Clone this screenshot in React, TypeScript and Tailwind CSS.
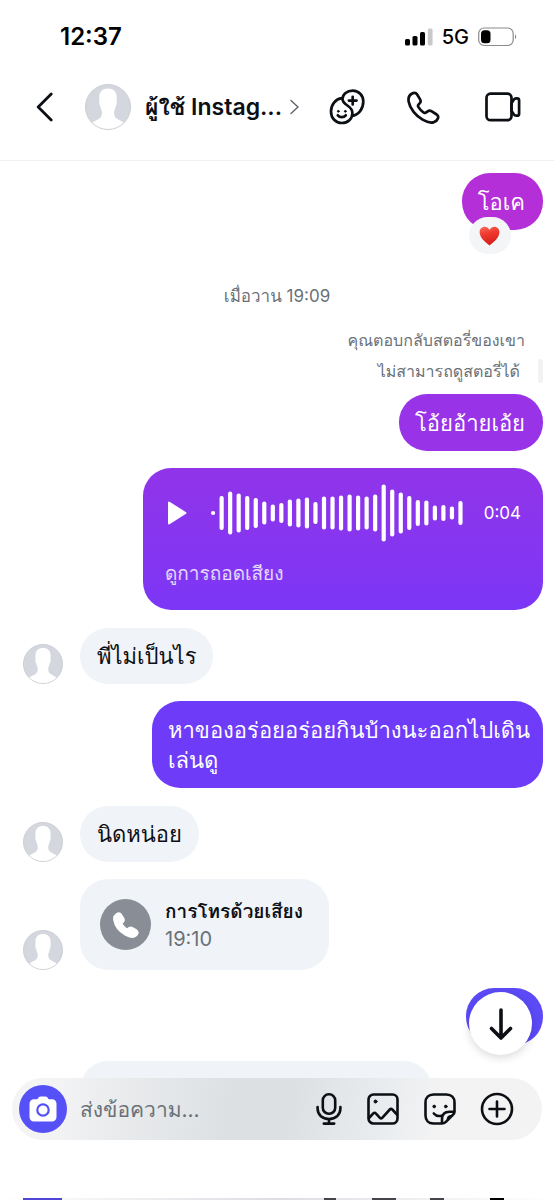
import type { ReactNode } from "react";

const WAVE = [4, 34, 43, 39, 34, 30, 23, 17, 20, 27, 29, 31, 22, 33, 33, 35, 37, 35, 33, 37, 57, 47, 41, 34, 26, 25, 15, 16, 13, 24];

function Avatar({ className }: { className: string }) {
  return (
    <svg viewBox="0 0 46 46" className={className} aria-hidden="true">
      <circle cx="23" cy="23" r="22.5" fill="#d4d7de" />
      <path
        d="M23 4.500c-5.300 0-8.700 3-8.700 8.500v3.500c-.5 2.500.2 5 1.200 6.300.3 2 .8 3.400 1.500 4.700.2 3.200-.6 5.700-3 7.200-2.200 1.400-5 2.200-7.200 4.300A22.500 22.500 0 0 0 23 45.500a22.500 22.500 0 0 0 16.200-6.500c-2.200-2.100-5-2.900-7.200-4.300-2.400-1.500-3.200-4-3-7.200.7-1.300 1.200-2.700 1.500-4.700 1-1.300 1.700-3.800 1.200-6.300V13c0-5.500-3.400-8.500-8.700-8.500z"
        fill="#fff"
      />
      <circle cx="23" cy="23" r="22.500" fill="none" stroke="#c6c9cf" strokeWidth="0.900" />
    </svg>
  );
}

function Incoming({ children, className }: { children: ReactNode; className: string }) {
  return (
    <div className="flex items-end gap-[17px] pl-[23px]">
      <Avatar className="size-10 shrink-0" />
      <div className={className}>{children}</div>
    </div>
  );
}

function SignalIcon() {
  return (
    <svg width="28" height="18" viewBox="0 0 28 18" aria-hidden="true">
      <rect x="0" y="11" width="5" height="6.500" rx="1.500" />
      <rect x="7.500" y="8" width="5" height="9.500" rx="1.500" />
      <rect x="15" y="4" width="5" height="13.500" rx="1.500" />
      <rect x="22.800" y="0.500" width="4.800" height="17" rx="1.500" fill="#c9c9c9" />
    </svg>
  );
}

function BatteryIcon() {
  return (
    <svg width="39" height="20" viewBox="0 0 39 20" aria-hidden="true">
      <rect x="0.700" y="1" width="34.500" height="17.500" rx="5.500" fill="none" stroke="#8b8b8b" strokeWidth="1.200" />
      <rect x="3" y="3.300" width="9.500" height="13" rx="3.500" />
      <path d="M37 7.500c1.600.6 1.600 4 0 4.600z" fill="#8b8b8b" />
    </svg>
  );
}

function FacesIcon() {
  return (
    <svg width="36" height="36" viewBox="0 0 36 36" fill="none" stroke="currentColor" strokeWidth="2.700" strokeLinecap="round" strokeLinejoin="round" aria-hidden="true">
      <path d="M12.800 9.200C6.500 10 2 15.700 2 22.500 2 29.300 6.700 34 12.800 34c6 0 10.600-4.300 10.600-9.800 0-3.800-2-5.700-5-7.700-3.200-2.100-4.900-3.700-4.900-6.500 0-4.800 4.700-8.400 10.200-8.400 6 0 10.600 4.700 10.600 10.900 0 7.300-4.700 13.500-11.300 14.300" />
      <path d="M23.700 7.800v7.600M19.900 11.600h7.600" />
      <path d="M8.800 26.300c2 2.400 6 2.400 8 0" />
      <circle cx="9.300" cy="22.300" r="0.900" fill="currentColor" strokeWidth="1" />
      <circle cx="16.300" cy="22.300" r="0.900" fill="currentColor" strokeWidth="1" />
    </svg>
  );
}

const PHONE =
  "M4.300 3C1.800 4.500 1.100 7.200 1.700 10.700c1.200 7 7.200 14.200 13.900 18 3.800 2.200 8.100 3.500 11.400 2.400 1.900-.7 3.400-2.200 4-3.900.5-1.500 0-2.800-1.300-3.700l-4.900-3.100c-1.500-.9-2.900-.9-4.100-.1l-1.900 1.300c-.8.500-1.500.5-2.300-.1-2-1.500-3.900-3.500-5.200-5.600-.5-.8-.4-1.500.2-2.200l1.300-1.500c.9-1.100 1.100-2.400.3-3.800L10 3.300C8.700 1.300 6.300 1.700 4.300 3z";

function PhoneIcon({ filled = false, className }: { filled?: boolean; className: string }) {
  return (
    <svg viewBox="0 0 33 33" className={className} fill={filled ? "currentColor" : "none"} stroke="currentColor" strokeWidth="2.700" strokeLinejoin="round" aria-hidden="true">
      <path d={PHONE} />
    </svg>
  );
}

function VideoIcon() {
  return (
    <svg width="36" height="30" viewBox="0 0 36 30" fill="none" stroke="currentColor" strokeWidth="2.700" strokeLinejoin="round" aria-hidden="true">
      <rect x="1.500" y="1.700" width="25" height="26.500" rx="4" />
      <path d="M26.500 11.300l2.200-3.500c.7-1.100 1.500-1.500 2.600-1.500h.7c1.400 0 2.100.8 2.100 2v13.400c0 1.200-.7 2-2.100 2h-.7c-1.100 0-1.900-.4-2.600-1.500l-2.200-3.500z" />
    </svg>
  );
}

function CameraIcon() {
  return (
    <svg width="28" height="26" viewBox="0 0 28 26" aria-hidden="true">
      <path d="M9.500 1.500C10 .8 10.800.5 11.700.5h4.600c.9 0 1.700.3 2.200 1l.6.900c.4.600 1 .9 1.700.9H23c2.700 0 4.500 1.800 4.500 4.500V21c0 2.700-1.800 4.500-4.500 4.500H5C2.300 25.500.5 23.700.5 21V7.800c0-2.700 1.800-4.500 4.500-4.500h2.200c.7 0 1.300-.3 1.700-.9z" fill="#fff" />
      <circle cx="14" cy="14" r="5.700" fill="none" stroke="#5551f7" strokeWidth="2.200" />
    </svg>
  );
}

function MicIcon() {
  return (
    <svg width="26" height="32" viewBox="0 0 26 32" fill="none" stroke="currentColor" strokeWidth="2.600" strokeLinecap="round" aria-hidden="true">
      <rect x="6.800" y="1.300" width="12.400" height="19.500" rx="6" />
      <path d="M1.600 14v1.500C1.600 22 6.500 26 13 26s11.400-4 11.400-10.500V14M13 26v4.500M7.800 30.600h10.400" />
    </svg>
  );
}

function PictureIcon() {
  return (
    <svg width="32" height="32" viewBox="0 0 32 32" fill="none" stroke="currentColor" strokeWidth="2.600" strokeLinecap="round" strokeLinejoin="round" aria-hidden="true">
      <rect x="1.500" y="1.500" width="29" height="29" rx="5" />
      <path d="M2 25l4.300-4.600c.9-.9 1.700-.9 2.500 0l4.100 4.400c.8.800 1.500.8 2.300 0l7.600-8.300c.8-.9 1.700-.9 2.500 0l4.700 5" />
      <circle cx="8.500" cy="8.500" r="1.500" fill="currentColor" strokeWidth="1" />
    </svg>
  );
}

function StickerIcon() {
  return (
    <svg width="32" height="32" viewBox="0 0 32 32" fill="none" stroke="currentColor" strokeWidth="2.600" strokeLinecap="round" strokeLinejoin="round" aria-hidden="true">
      <path d="M17.500 30.500h-8c-5 0-8-3-8-8v-13c0-5 3-8 8-8h13c5 0 8 3 8 8v8.800c0 1.300-.4 2.400-1.400 3.400l-7.200 7.200c-1.200 1.200-2.600 1.600-4.400 1.600z" />
      <path d="M18 30v-3.500c0-4.800 2.700-7.700 7.500-7.700h4.700M24 26.500c-.2-2 1-3.300 3.200-3.500M9.800 20.500c1.800 2.200 4.700 3 7.700 2.200" />
      <circle cx="10.200" cy="13.500" r="1.400" fill="currentColor" strokeWidth="0.800" />
      <circle cx="21.800" cy="13.500" r="1.400" fill="currentColor" strokeWidth="0.800" />
    </svg>
  );
}

function PlusIcon() {
  return (
    <svg width="34" height="34" viewBox="0 0 34 34" fill="none" stroke="currentColor" strokeWidth="2.600" strokeLinecap="round" aria-hidden="true">
      <circle cx="17" cy="17" r="15" />
      <path d="M17 9.500v15M9.500 17h15" />
    </svg>
  );
}

function Heart() {
  return (
    <svg width="21" height="20" viewBox="0 0 21 20" role="img" aria-label="❤️">
      <defs>
        <linearGradient id="heart" x1="0" y1="0" x2="0.300" y2="1">
          <stop offset="0" stopColor="#fb6a5c" />
          <stop offset="0.450" stopColor="#ef3a30" />
          <stop offset="1" stopColor="#d81e1a" />
        </linearGradient>
      </defs>
      <path d="M10.500 19.500C7 16.500.6 12 .6 6.200.6 3 2.800.7 5.600.7c2.300 0 4 1.300 4.900 3.400.9-2.100 2.600-3.400 4.900-3.400 2.800 0 5 2.300 5 5.500 0 5.800-6.400 10.300-9.900 13.300z" fill="url(#heart)" />
    </svg>
  );
}

export default function App() {
  return (
    <div className="relative flex h-screen flex-col overflow-hidden bg-white font-['Inter','Loma','Noto_Sans_Thai',sans-serif] text-[#0c1014]">
      <div className="flex h-[74px] shrink-0 items-center justify-between pr-[37px] pl-[60px] text-black">
        <span className="text-2xl leading-7 font-semibold">12:37</span>
        <div className="flex items-center gap-[9px]">
          <SignalIcon />
          <span className="text-xl leading-6 font-medium">5G</span>
          <BatteryIcon />
        </div>
      </div>

      <header className="flex h-[87px] shrink-0 items-start border-b border-[#eeeff1] pr-[33px] pl-9">
        <div className="flex h-[66px] min-w-0 flex-1 items-center">
          <button aria-label="ย้อนกลับ" className="mr-8 shrink-0">
            <svg width="17" height="30" viewBox="0 0 17 30" fill="none" stroke="currentColor" strokeWidth="2.800" strokeLinecap="round" strokeLinejoin="round">
              <path d="M15.200 2L2.200 15l13 13" />
            </svg>
          </button>
          <button className="flex min-w-0 items-center">
            <Avatar className="size-[46px] shrink-0" />
            <span className="ml-[14px] truncate text-[23px] leading-[38px] font-semibold">ผู้ใช้ Instag...</span>
            <svg className="ml-2 shrink-0" width="9" height="16" viewBox="0 0 9 16" fill="none" stroke="#5f6368" strokeWidth="1.400" strokeLinecap="round">
              <path d="M1 1.500L8 8l-7 6.500" />
            </svg>
          </button>
        </div>
        <div className="flex h-[66px] shrink-0 items-center">
          <button aria-label="สติกเกอร์" className="mr-[42px]"><FacesIcon /></button>
          <button aria-label="โทร" className="mr-[45px]"><PhoneIcon className="size-[33px]" /></button>
          <button aria-label="วิดีโอคอล"><VideoIcon /></button>
        </div>
      </header>

      <main className="flex min-h-0 flex-1 flex-col overflow-hidden pt-3 text-[22px] leading-[30px]">
        <div className="relative mr-[11px] shrink-0 self-end rounded-[28px] bg-[#b42fd8] pt-[14px] pr-[18px] pb-[13px] pl-4 text-white">
          โอเค
          <span className="absolute top-11 left-[7px] flex h-[37px] w-[42px] items-center justify-center rounded-full bg-[#f3f5f7]">
            <Heart />
          </span>
        </div>

        <p className="mt-[54px] shrink-0 text-center text-[17px] leading-6 text-[#6a7178]">เมื่อวาน 19:09</p>
        <p className="mt-5 mr-[29px] shrink-0 text-right text-base leading-6 text-[#6a7178]">คุณตอบกลับสตอรี่ของเขา</p>
        <div className="mt-[7px] mr-[11px] flex shrink-0 items-center justify-end gap-[18px] text-base leading-6 text-[#6a7178]">
          <span>ไม่สามารถดูสตอรี่ได้</span>
          <span className="h-6 w-[5px] rounded-sm bg-[#f1f2f4]" />
        </div>
        <div className="mt-[11px] mr-[11px] shrink-0 self-end rounded-[28px] bg-[#9833e8] pt-[14px] pr-[18px] pb-[13px] pl-4 text-white">โอ้ยอ้ายเอ้ย</div>

        <section className="mt-[17px] mr-[11px] flex h-[142px] w-[400px] shrink-0 flex-col self-end rounded-[28px] bg-linear-to-b from-[#9134e9] to-[#7c36f6] px-[22px] pt-4 text-white">
          <div className="flex items-center">
            <button aria-label="เล่น" className="mr-[22px]">
              <svg width="22" height="24" viewBox="0 0 22 24" fill="#fff" stroke="#fff" strokeWidth="2" strokeLinejoin="round">
                <path d="M4 1.500v21L20.500 12z" />
              </svg>
            </button>
            <svg width="254" height="58" viewBox="0 0 254 58" aria-hidden="true">
              {WAVE.map((h, i) => (
                <rect key={i} x={2 + i * 8.53} y={29 - h / 2} width="4.200" height={h} rx="2" fill="#fff" />
              ))}
            </svg>
            <span className="ml-auto text-[17px] leading-6">0:04</span>
          </div>
          <button className="mt-[18px] self-start text-[19px] leading-[28px] text-white/80">ดูการถอดเสียง</button>
        </section>

        <div className="mt-[18px] shrink-0">
          <Incoming className="rounded-[28px] bg-[#f0f3f7] px-[17px] py-[13px]">พี่ไม่เป็นไร</Incoming>
        </div>

        <div className="mt-[17px] mr-[11px] w-[391px] shrink-0 self-end rounded-[28px] bg-[#6e3cf9] pt-[14px] pr-2 pb-[13px] pl-4 text-white">
          หาของอร่อยอร่อยกินบ้างนะออกไปเดินเล่นดู
        </div>

        <div className="mt-[18px] shrink-0">
          <Incoming className="rounded-[28px] bg-[#f0f3f7] px-[17px] py-[13px]">นิดหน่อย</Incoming>
        </div>

        <div className="mt-[17px] shrink-0">
          <Incoming className="flex h-[91px] w-[249px] items-center gap-[14px] rounded-[28px] bg-[#f0f3f7] px-5">
            <span className="flex size-[51px] shrink-0 items-center justify-center rounded-full bg-[#898e96] text-white">
              <PhoneIcon filled className="size-[26px]" />
            </span>
            <span className="flex flex-col whitespace-nowrap">
              <span className="text-[19px] leading-[28px] font-semibold">การโทรด้วยเสียง</span>
              <span className="text-xl leading-[26px] text-[#6a7178]">19:10</span>
            </span>
          </Incoming>
        </div>

        <div className="relative mt-[18px] mr-[11px] h-[57px] w-[77px] shrink-0 self-end rounded-[28px] bg-[#5b4af6]">
          <button aria-label="เลื่อนลง" className="absolute top-1 left-[3px] flex size-[63px] items-center justify-center rounded-full bg-white shadow-[0_3px_8px_rgba(0,0,0,0.14)]">
            <svg width="24" height="34" viewBox="0 0 24 34" fill="none" stroke="currentColor" strokeWidth="3.600" strokeLinecap="round" strokeLinejoin="round">
              <path d="M12 3v27.500M2.500 21.500l9.500 9.500 9.500-9.500" />
            </svg>
          </button>
        </div>
        <div className="mt-4 ml-20 h-14 w-[352px] shrink-0 rounded-[28px] bg-[#f0f3f7]" />
      </main>

      <footer className="absolute inset-x-0 bottom-0">
        <form className="mx-3 flex h-[62px] items-center rounded-full bg-[linear-gradient(100deg,#f4f4f5_8%,#e8eaec_22%,#dde0e3_42%,#dde0e3_52%,#e6eaed_66%,#f3f3f4_80%)] pr-[28px] pl-[7px]">
          <button type="button" aria-label="กล้อง" className="flex size-12 shrink-0 items-center justify-center rounded-full bg-[#5551f7]">
            <CameraIcon />
          </button>
          <input aria-label="ส่งข้อความ" placeholder="ส่งข้อความ..." className="mx-[13px] h-12 min-w-0 flex-1 bg-transparent text-[21px] outline-none placeholder:text-[#6a7178]" />
          <div className="flex shrink-0 items-center">
            <button type="button" aria-label="ข้อความเสียง" className="mr-[25px]"><MicIcon /></button>
            <button type="button" aria-label="รูปภาพ" className="mr-[25px]"><PictureIcon /></button>
            <button type="button" aria-label="สติกเกอร์" className="mr-6"><StickerIcon /></button>
            <button type="button" aria-label="เพิ่มเติม"><PlusIcon /></button>
          </div>
        </form>
        <div className="mt-[58px] flex h-[2px] items-stretch bg-linear-to-r from-white via-[#dcdee2] to-white pr-[50px] pl-[23px]">
          <span className="w-[39px] bg-[#5145d8]" />
          <span className="mr-9 ml-auto w-3 bg-[#44464a]" />
          <span className="mr-[34px] w-6 bg-[#44464a]" />
          <span className="mr-[46px] w-[14px] bg-[#44464a]" />
          <span className="w-[14px] bg-black" />
        </div>
      </footer>
    </div>
  );
}
